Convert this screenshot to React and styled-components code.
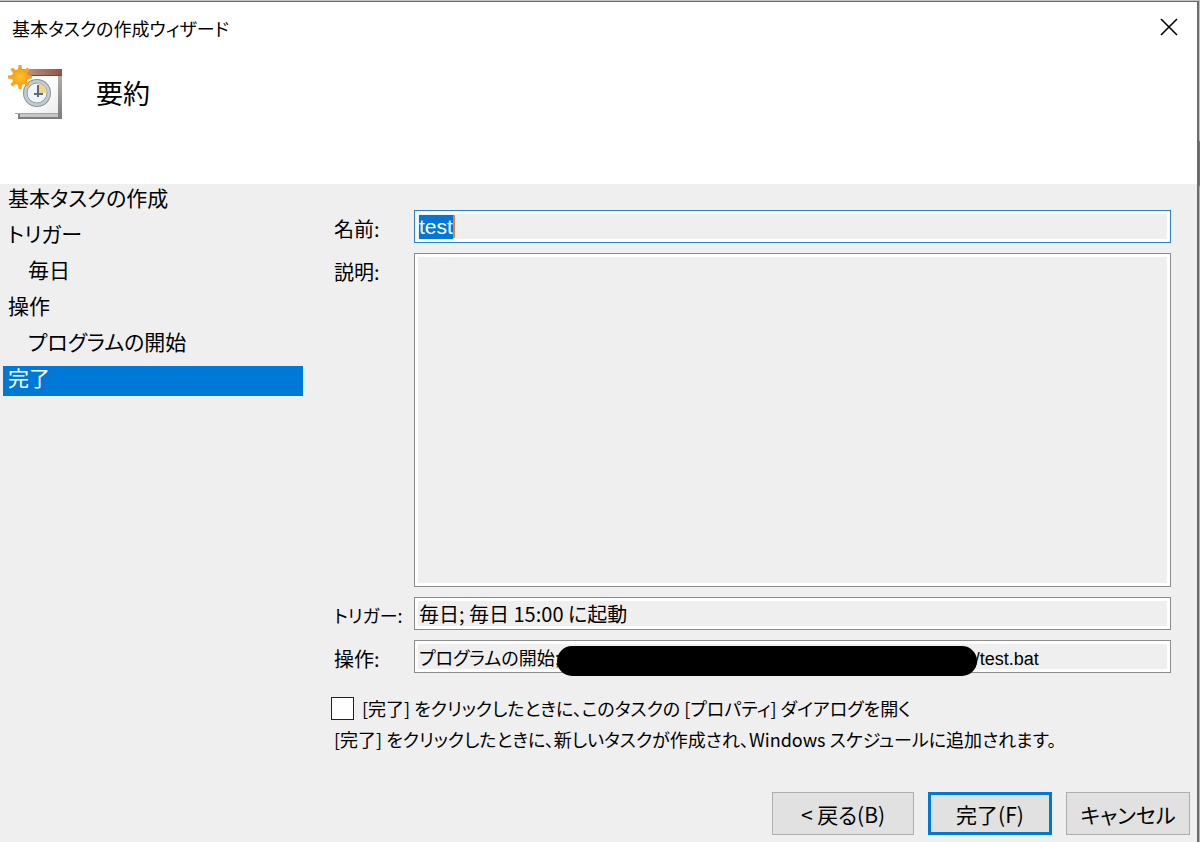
import React, { useEffect, useRef } from "react";
import styled, { createGlobalStyle, css } from "styled-components";

const GlobalStyle = createGlobalStyle`
  * {
    box-sizing: border-box;
  }

  body {
    margin: 0;
    background: #efefef;
    color: #000;
    font-family: "Noto Sans CJK JP", sans-serif;
    font-feature-settings: "palt";
    font-size: 18px;
    line-height: 30px;
  }

  button,
  input,
  textarea {
    font: inherit;
    font-feature-settings: inherit;
    color: inherit;
  }
`;

// thin strip of whatever lies behind the dialog
const Backdrop = styled.div`
  min-height: 100vh;
  display: flex;
  padding: 1px 1px 0 0;
  background: linear-gradient(#c2c4c2 140px, #5f7590 142px 185px, #b4b4b4 187px);
`;

const Dialog = styled.div`
  flex: 1;
  background: #efefef;
  border: solid #6c6c6c;
  border-width: 1px 2px 0 0;
`;

const Header = styled.header`
  height: 182px;
  background: #fff;
`;

const TitleBar = styled.div`
  display: flex;
  align-items: center;
  justify-content: space-between;
  height: 52px;
  padding: 0 17px 0 12px;
`;

const CloseButton = styled.button`
  display: flex;
  padding: 0 2px 2px;
  border: 0;
  background: none;
`;

const Heading = styled.div`
  display: flex;
  align-items: center;
  gap: 32px;
  padding: 11px 8px 0;
`;

const PageTitle = styled.h1`
  margin: 0;
  font-size: 27px;
  font-weight: 400;
  line-height: 36px;
`;

const Body = styled.div`
  display: grid;
  grid-template-columns: 303px 1fr;
  column-gap: 28px;
  padding-right: 26px;
`;

const Steps = styled.ol`
  display: flex;
  flex-direction: column;
  gap: 6px;
  margin: 0;
  padding: 2px 0 0 3px;
  list-style: none;
`;

const Step = styled.li`
  height: 30px;
  padding-left: ${props => (props.$nested ? 25 : 5)}px;
  font-size: 21px;
  line-height: 22px;
  ${props =>
    props.$current &&
    css`
      background: #0078d7;
      color: #fff;
    `}
`;

const Form = styled.form`
  padding-top: 26px;
`;

const Fields = styled.div`
  display: grid;
  grid-template-columns: 80px 1fr;
  column-gap: 3px;
  row-gap: 10px;
`;

const Label = styled.label`
  padding: 5px 0 0 3px;
  font-size: ${props => (props.$compact ? 18 : 20)}px;
  line-height: 27px;
`;

const fieldBox = css`
  display: block;
  width: 100%;
  padding: 0 4px;
  border: 1px solid #8c8c8c;
  border-radius: 0;
  outline: 0;
  background: #efefef;
  box-shadow: inset 0 0 0 3px #fff;

  &:focus {
    border-color: #2a82c9;
  }

  &::selection {
    background: #0078d7;
    color: #fff;
  }
`;

const TextBox = styled.input`
  ${fieldBox}
  height: 33px;
  font-family: ${props => (props.$latin ? '"Liberation Sans", ' : "")}"Noto Sans CJK JP", sans-serif;
  font-size: ${props => props.$size || 20}px;
  line-height: 20px;
`;

const TextArea = styled.textarea`
  ${fieldBox}
  height: 334px;
  resize: none;
`;

const FieldSlot = styled.div`
  position: relative;
`;

const Caret = styled.span`
  position: absolute;
  top: 5px;
  left: 39px;
  width: 2px;
  height: 23px;
  background: #d9853b;
`;

const Redaction = styled.span`
  position: absolute;
  top: 6px;
  left: 143px;
  width: 420px;
  height: 30px;
  border-radius: 15px;
  background: #000;
`;

const CheckRow = styled.label`
  display: flex;
  align-items: center;
  gap: 8px;
  margin-top: 20px;
`;

const CheckBox = styled.input`
  appearance: none;
  width: 23px;
  height: 23px;
  margin: 0;
  border: 1px solid #222;
  background: #fff;
`;

const Note = styled.p`
  margin: 1px 0 0;
  padding-left: 3px;
`;

const Footer = styled.footer`
  display: flex;
  justify-content: flex-end;
  gap: 14px;
  padding: 38px 7px 6px;
`;

const Button = styled.button`
  width: ${props => (props.$wide ? 142 : 124)}px;
  height: 43px;
  padding: 0;
  border: ${props => (props.$primary ? "3px solid #0078d7" : "1px solid #adadad")};
  background: #e1e1e1;
  font-size: 21px;
`;

const rays = [0, 45, 90, 135, 180, 225, 270, 315];

function TaskIcon() {
  return (
    <svg width="56" height="56" viewBox="0 0 56 56" aria-hidden="true">
      <defs>
        <linearGradient id="bar" x1="0" y1="0" x2="1" y2="0">
          <stop offset="0" stopColor="#c99a88" />
          <stop offset="1" stopColor="#955441" />
        </linearGradient>
        <linearGradient id="edge" x1="0" y1="0" x2="0" y2="1">
          <stop offset="0" stopColor="#b4b4b4" />
          <stop offset="1" stopColor="#7c7c7c" />
        </linearGradient>
        <linearGradient id="sheet" x1="0" y1="0" x2="1" y2="1">
          <stop offset="0.5" stopColor="#fff" />
          <stop offset="1" stopColor="#ececec" />
        </linearGradient>
        <radialGradient id="sun">
          <stop offset="0" stopColor="#ffc62e" />
          <stop offset="1" stopColor="#f7a010" />
        </radialGradient>
      </defs>
      <rect x="10" y="5" width="44" height="49" fill="url(#edge)" />
      <rect x="12" y="46" width="38" height="6" fill="#c6c6c6" />
      <path d="M10 8h40v40l-4 0H7c2-3 3-7 3-13z" fill="url(#sheet)" />
      <path d="M7 48.500h43" fill="none" stroke="#a6a6a6" />
      <rect x="11" y="4" width="43" height="6" fill="url(#bar)" />
      <rect x="11" y="10" width="43" height="1" fill="#7d4636" />
      <circle cx="29" cy="28" r="14" fill="#8b949b" />
      <circle cx="29" cy="28" r="13" fill="#c3cbd1" />
      <circle cx="29" cy="28" r="10" fill="#eef4fa" stroke="#939da5" />
      <path d="M30 28v-10a10 10 0 0 1 9 10z" fill="#f2d58c" />
      <path d="M30 20v12M26 29h9" fill="none" stroke="#5f6c78" strokeWidth="2" />
      <g fill="#f8a51b">
        {rays.map(angle => (
          <path key={angle} d="M9.500 8l1-8h3l1 8z" transform={`rotate(${angle} 12 12)`} />
        ))}
      </g>
      <circle cx="12" cy="12" r="8" fill="url(#sun)" />
    </svg>
  );
}

const steps = [
  { text: "基本タスクの作成" },
  { text: "トリガー" },
  { text: "毎日", nested: true },
  { text: "操作" },
  { text: "プログラムの開始", nested: true },
  { text: "完了", current: true }
];

// the middle of the path is covered by the redaction bar
const actionText = "プログラムの開始;" + " ".repeat(83) + "/test.bat";

function App() {
  const nameRef = useRef(null);

  useEffect(() => {
    nameRef.current.focus();
    nameRef.current.select();
  }, []);

  return (
    <Backdrop>
      <GlobalStyle />
      <Dialog>
        <Header>
          <TitleBar>
            <span>基本タスクの作成ウィザード</span>
            <CloseButton type="button" aria-label="閉じる">
              <svg width="18" height="18" viewBox="0 0 18 18">
                <path d="M1 1l16 16M17 1L1 17" stroke="#000" strokeWidth="1.600" />
              </svg>
            </CloseButton>
          </TitleBar>
          <Heading>
            <TaskIcon />
            <PageTitle>要約</PageTitle>
          </Heading>
        </Header>
        <Body>
          <Steps>
            {steps.map(step => (
              <Step key={step.text} $nested={step.nested} $current={step.current}>
                {step.text}
              </Step>
            ))}
          </Steps>
          <Form onSubmit={event => event.preventDefault()}>
            <Fields>
              <Label htmlFor="name">名前:</Label>
              <FieldSlot>
                <TextBox id="name" ref={nameRef} $latin $size={21} readOnly value="test" />
                <Caret />
              </FieldSlot>
              <Label htmlFor="description">説明:</Label>
              <TextArea id="description" readOnly value="" />
              <Label htmlFor="trigger" $compact>
                トリガー:
              </Label>
              <TextBox id="trigger" readOnly value="毎日; 毎日 15:00 に起動" />
              <Label htmlFor="action">操作:</Label>
              <FieldSlot>
                <TextBox id="action" $latin $size={18} readOnly value={actionText} />
                <Redaction />
              </FieldSlot>
            </Fields>
            <CheckRow>
              <CheckBox type="checkbox" />
              [完了] をクリックしたときに、このタスクの [プロパティ] ダイアログを開く
            </CheckRow>
            <Note>
              [完了] をクリックしたときに、新しいタスクが作成され、Windows スケジュールに追加されます。
            </Note>
          </Form>
        </Body>
        <Footer>
          <Button type="button" $wide>
            &lt; 戻る(B)
          </Button>
          <Button type="button" $primary>
            完了(F)
          </Button>
          <Button type="button">キャンセル</Button>
        </Footer>
      </Dialog>
    </Backdrop>
  );
}

export default App;
